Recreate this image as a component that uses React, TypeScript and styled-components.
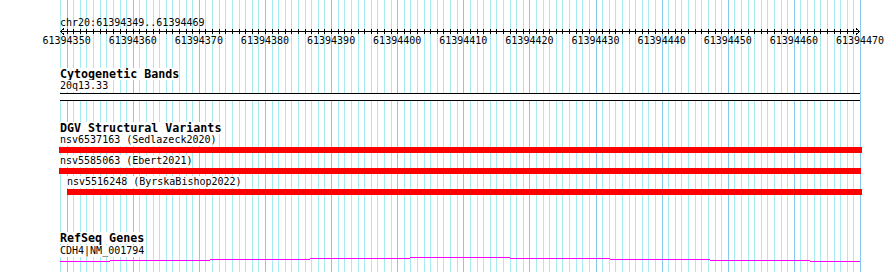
import React from "react";
import styled, { createGlobalStyle } from "styled-components";

const START = 61394349;
const END = 61394469;
const LEFT = 60;
const TRACK_WIDTH = 800;
const BP = TRACK_WIDTH / (END - START + 1);

const toX = (pos: number) => LEFT + (pos - START) * BP;
const crisp = (x: number) => Math.round(x) + 0.5;

const bases = Array.from({ length: END - START + 2 }, (_, i) => START + i);

const variants = [
  { name: "nsv6537163 (Sedlazeck2020)", indent: 0, start: -1, end: 802 },
  { name: "nsv5585063 (Ebert2021)", indent: 0, start: -1, end: 801 },
  { name: "nsv5516248 (ByrskaBishop2022)", indent: 7, start: 7, end: 802 },
];

// gene line steps: [from, to, y]
const geneSteps: [number, number, number][] = [
  [0, 50, 4],
  [50, 150, 3],
  [150, 250, 2],
  [250, 350, 1],
  [350, 450, 0],
  [450, 550, 1],
  [550, 650, 2],
  [650, 750, 3],
  [750, 800, 4],
];

const GlobalStyle = createGlobalStyle`
  html, body {
    margin: 0;
    padding: 0;
    background: #ffffff;
  }
  body {
    font-family: "DejaVu Sans Mono", "Liberation Mono", monospace;
    color: #000000;
  }
`;

const App = () => {
  return (
    <>
      <GlobalStyle />
      <Canvas>
        <GridLayer width={890} height={272}>
          {bases.map((p) => (
            <line
              key={p}
              x1={crisp(toX(p))}
              x2={crisp(toX(p))}
              y1={0}
              y2={272}
              stroke={p % 10 === 0 ? "#86c9ea" : "#a6ebf0"}
              strokeWidth={1}
            />
          ))}
        </GridLayer>

        <Content>
          <Ruler width={890} height={50}>
            <RulerTitle x={LEFT} y={26}>
              chr20:{START}..{END}
            </RulerTitle>
            <line x1={LEFT} x2={LEFT + TRACK_WIDTH} y1={31.5} y2={31.5} stroke="#000" />
            <polyline
              points={`${LEFT + 4},28.5 ${LEFT + 0.5},31.5 ${LEFT + 4},34.5`}
              fill="none"
              stroke="#000"
            />
            <polyline
              points={`${LEFT + TRACK_WIDTH - 4},28.5 ${LEFT + TRACK_WIDTH - 0.5},31.5 ${LEFT + TRACK_WIDTH - 4},34.5`}
              fill="none"
              stroke="#000"
            />
            {bases.slice(1, -1).map((p) => (
              <line
                key={p}
                x1={crisp(toX(p))}
                x2={crisp(toX(p))}
                y1={29}
                y2={34}
                stroke="#000"
              />
            ))}
            {bases
              .filter((p) => p % 10 === 0)
              .map((p) => (
                <RulerLabel key={p} x={toX(p)} y={44}>
                  {p}
                </RulerLabel>
              ))}
          </Ruler>

          <Track $gap={18}>
            <TrackTitle>Cytogenetic Bands</TrackTitle>
            <FeatureLabel>20q13.33</FeatureLabel>
            <Band />
          </Track>

          <Track $gap={21}>
            <TrackTitle>DGV Structural Variants</TrackTitle>
            {variants.map((v) => (
              <VariantRow key={v.name}>
                <FeatureLabel $indent={v.indent}>{v.name}</FeatureLabel>
                <VariantBar
                  style={{ marginLeft: v.start, width: v.end - v.start }}
                />
              </VariantRow>
            ))}
          </Track>

          <Track $gap={35}>
            <TrackTitle>RefSeq Genes</TrackTitle>
            <FeatureLabel $top={1}>CDH4|NM_001794</FeatureLabel>
            <GeneLine width={TRACK_WIDTH} height={5}>
              {geneSteps.map(([a, b, y]) => (
                <rect key={a} x={a} y={y} width={b - a} height={1} fill="#ff00ff" />
              ))}
            </GeneLine>
          </Track>
        </Content>
      </Canvas>
    </>
  );
};

export default App;

const Canvas = styled.div`
  display: grid;
  width: 890px;
  height: 272px;
  overflow: hidden;
  background: #ffffff;
  & > * {
    grid-area: 1 / 1;
  }
`;

const GridLayer = styled.svg`
  display: block;
  shape-rendering: crispEdges;
`;

const Content = styled.div`
  position: relative;
  z-index: 1;
  display: flex;
  flex-direction: column;
`;

const Ruler = styled.svg`
  display: block;
  shape-rendering: crispEdges;
  font-family: "DejaVu Sans Mono", "Liberation Mono", monospace;
  font-size: 10px;
`;

const RulerTitle = styled.text`
  fill: #000;
`;

const RulerLabel = styled.text`
  fill: #000;
  text-anchor: middle;
`;

const Track = styled.div<{ $gap: number }>`
  display: flex;
  flex-direction: column;
  margin-top: ${(p) => p.$gap}px;
  padding-left: ${LEFT}px;
  width: ${TRACK_WIDTH}px;
`;

const TrackTitle = styled.div`
  width: fit-content;
  background: #ffffff;
  font-weight: bold;
  font-size: 11.67px;
  line-height: 12px;
  height: 12px;
  white-space: pre;
`;

const FeatureLabel = styled.div<{ $indent?: number; $top?: number }>`
  width: fit-content;
  background: #ffffff;
  font-size: 10px;
  line-height: 12px;
  height: 12px;
  white-space: pre;
  margin-left: ${(p) => p.$indent ?? 0}px;
  margin-top: ${(p) => p.$top ?? 0}px;
`;

const Band = styled.div`
  box-sizing: border-box;
  margin-top: 1px;
  width: ${TRACK_WIDTH}px;
  height: 8px;
  background: #ffffff;
  border-top: 1px solid #000;
  border-bottom: 1px solid #000;
`;

const VariantRow = styled.div`
  display: flex;
  flex-direction: column;
  padding-bottom: 2px;
`;

const VariantBar = styled.div`
  margin-top: 1px;
  height: 6px;
  background: #ff0000;
`;

const GeneLine = styled.svg`
  display: block;
  shape-rendering: crispEdges;
`;
